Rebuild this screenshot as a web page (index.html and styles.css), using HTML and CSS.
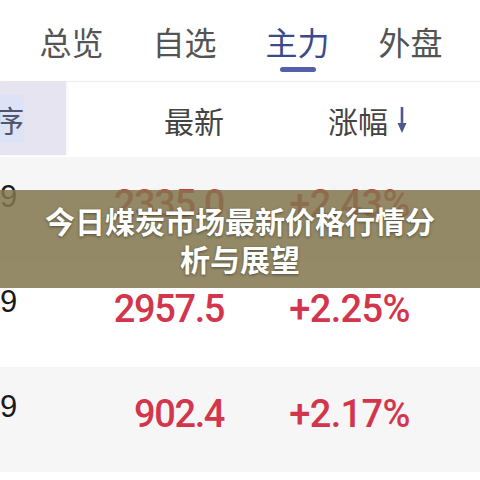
FILE: index.html
```html
<!DOCTYPE html>
<html lang="zh-CN">
<head>
<meta charset="utf-8">
<title>今日煤炭市场最新价格行情分析与展望</title>
<link rel="stylesheet" href="styles.css">
</head>
<body>
<div class="page">
  <nav class="tabs">
    <div class="tab">总览</div>
    <div class="tab">自选</div>
    <div class="tab active">主力<span class="bar"></span></div>
    <div class="tab">外盘</div>
  </nav>
  <div class="head">
    <div class="sort-cell"><span class="sort-text">序</span></div>
    <div class="hcell">最新</div>
    <div class="hcell">涨幅<svg class="arrow" width="12" height="28" viewBox="0 0 12 28"><path d="M6 1 V20" stroke="#4b598c" stroke-width="2.6" fill="none"/><path d="M1.5 17 L10.5 17 L6 27 Z" fill="#4b598c"/></svg></div>
    <div></div>
  </div>
  <div class="row grey">
    <div class="code">9</div>
    <div class="num price">2335.0</div>
    <div class="num">+2.43%</div>
    <div></div>
  </div>
  <div class="row">
    <div class="code">9</div>
    <div class="num price">2957.5</div>
    <div class="num">+2.25%</div>
    <div></div>
  </div>
  <div class="row grey">
    <div class="code">9</div>
    <div class="num price">902.4</div>
    <div class="num">+2.17%</div>
    <div></div>
  </div>
  <div class="banner">今日煤炭市场最新价格行情分析与展望</div>
</div>
</body>
</html>
```
FILE: styles.css
```css
* { box-sizing: border-box; }
html, body { margin: 0; padding: 0; background: #fff; }
.page {
  position: relative;
  width: 480px;
  height: 480px;
  overflow: hidden;
  font-family: "Noto Sans CJK SC", "Noto Sans", sans-serif;
}
.tabs {
  height: 82px;
  display: grid;
  grid-template-columns: repeat(4, 1fr);
  padding: 0 13px 0 15px;
  border-bottom: 1px solid #ececec;
}
.tab {
  display: flex;
  flex-direction: column;
  align-items: center;
  padding-top: 25px;
  font-size: 32px;
  line-height: 32px;
  color: #545454;
}
.tab.active { color: #3b4a8b; }
.bar {
  display: block;
  width: 36px;
  height: 5px;
  margin-top: 10px;
  border-radius: 3px;
  background: #5560aa;
}
.head {
  height: 75px;
  display: grid;
  grid-template-columns: 66px 158px 186px 70px;
  align-items: center;
}
.sort-cell {
  height: 73px;
  align-self: start;
  background: #e6e4f0;
  box-shadow: 1px 0 3px rgba(0,0,0,0.06);
  display: flex;
  align-items: center;
  overflow: hidden;
}
.sort-text {
  margin-left: -6px;
  padding: 8px 0;
  font-size: 30px;
  line-height: 32px;
  color: #50566e;
  background: #dde3f6;
}
.hcell {
  display: flex;
  justify-content: flex-end;
  align-items: center;
  font-size: 30px;
  line-height: 32px;
  color: #444;
}
.arrow { margin-left: 8px; margin-right: 2px; }
.row {
  height: 105px;
  display: grid;
  grid-template-columns: 66px 158px 186px 70px;
  align-items: start;
  background: #fff;
}
.row.grey { background: #f6f6f6; }
.code {
  padding-top: 24px;
  font-family: "Liberation Sans", Arial, sans-serif;
  font-size: 31px;
  line-height: 1;
  color: #1a1a1a;
}
.num {
  padding-top: 28px;
  text-align: right;
  font-family: Roboto, "Liberation Sans", sans-serif;
  font-weight: 500;
  font-size: 38px;
  line-height: 1;
  letter-spacing: -0.6px;
  color: #d3364c;
}
.num.price { letter-spacing: -1.4px; }
.banner {
  position: absolute;
  left: 0;
  top: 190px;
  width: 480px;
  height: 98px;
  padding: 11px 40px 0;
  background: rgba(130, 119, 78, 0.86);
  color: #fff;
  font-weight: 700;
  font-size: 30px;
  line-height: 38px;
  text-align: center;
  text-shadow: 0 1px 3px rgba(0,0,0,0.45);
}
```
